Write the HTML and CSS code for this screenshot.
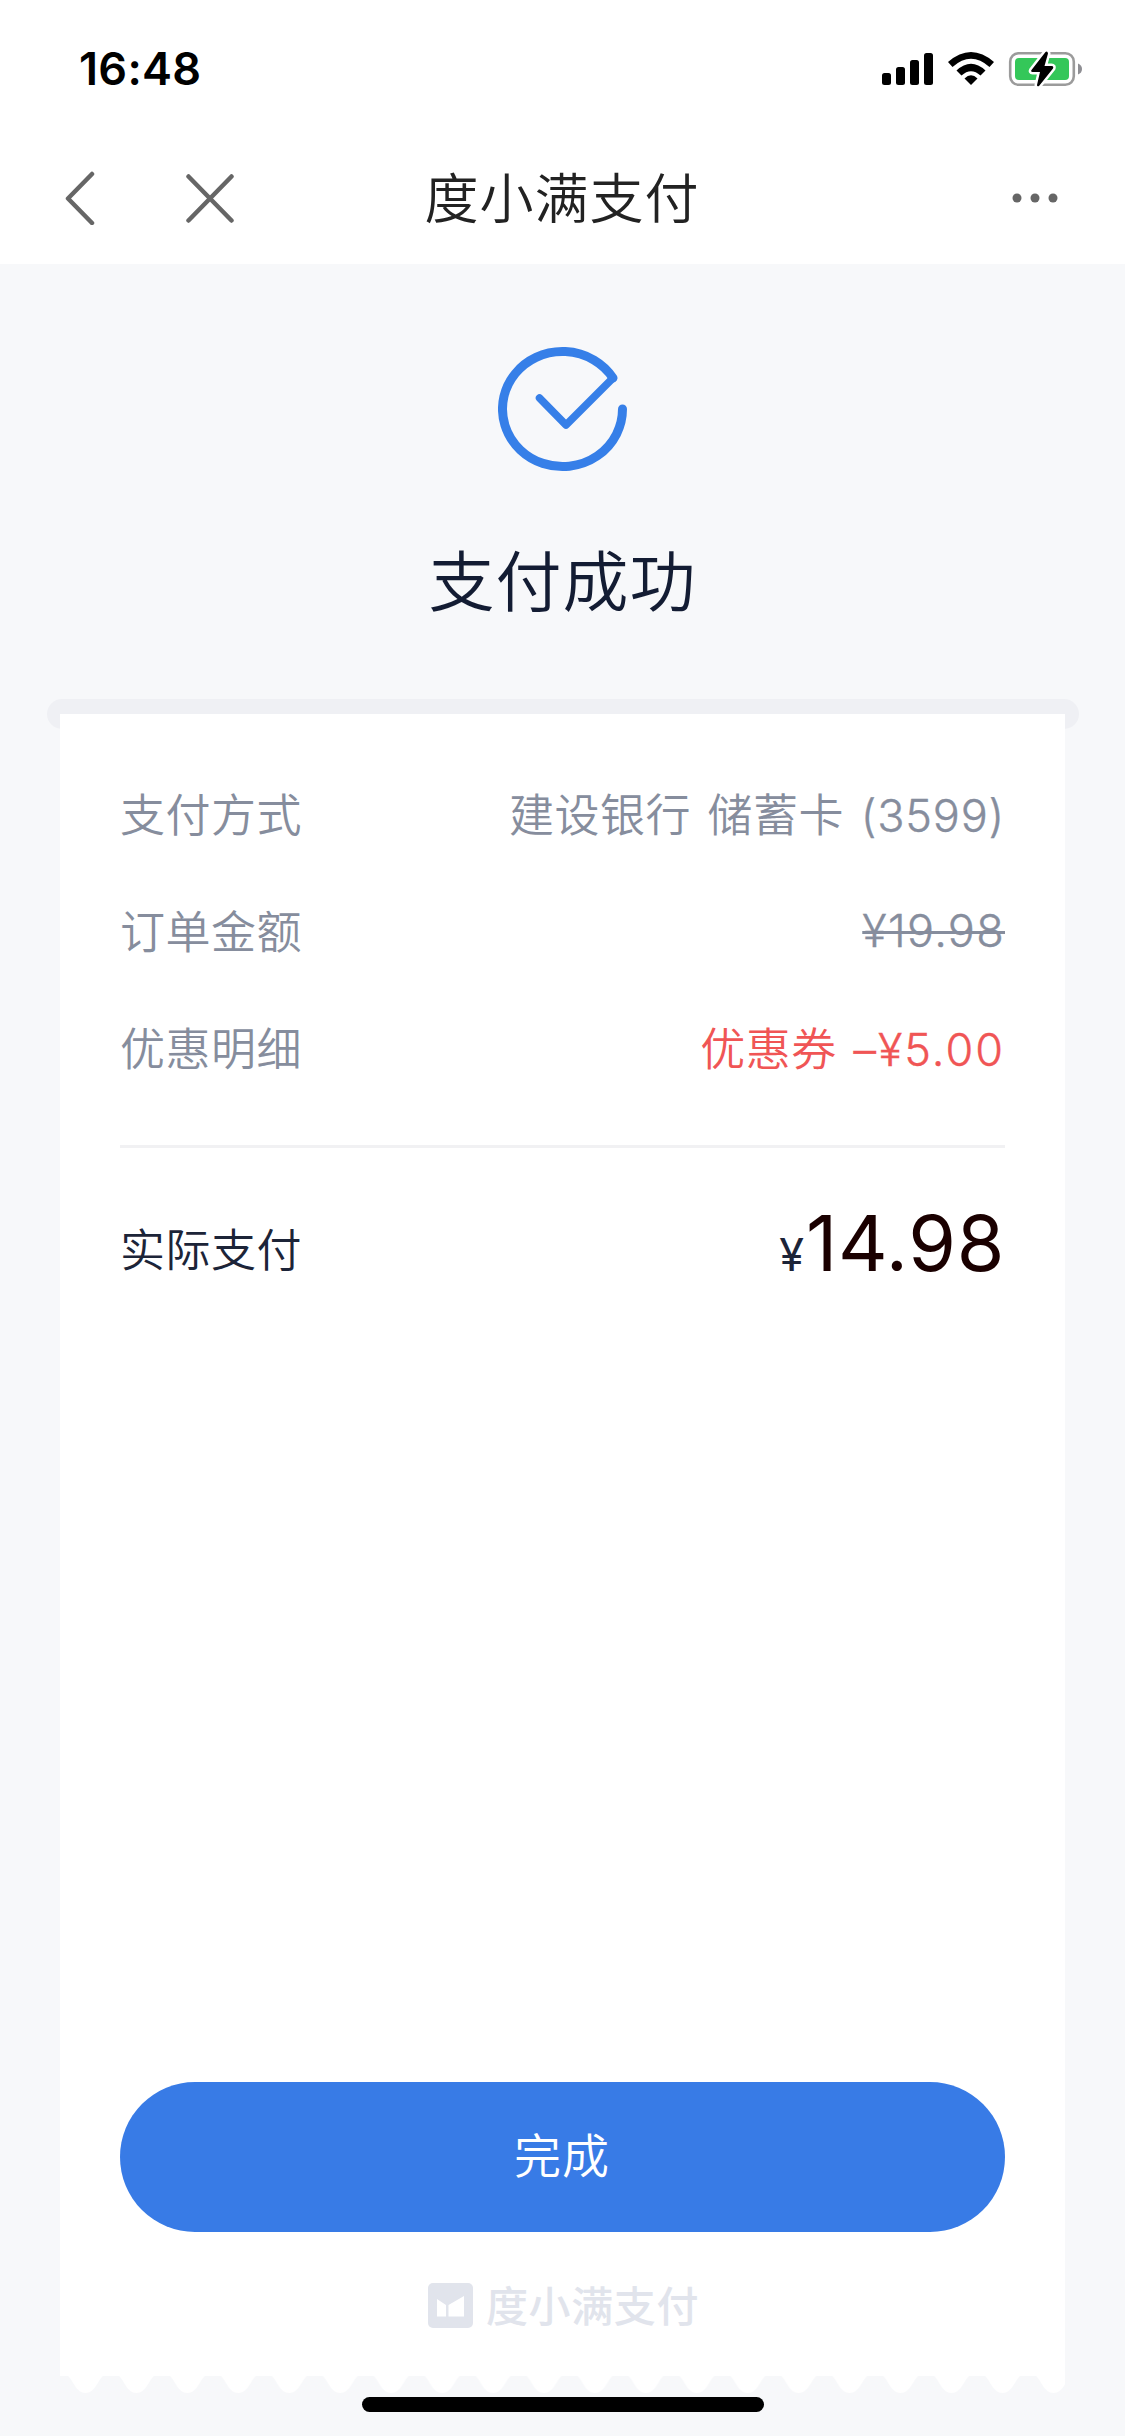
FILE: index.html
```html
<!DOCTYPE html>
<html lang="zh-CN">
<head>
<meta charset="utf-8">
<title>度小满支付</title>
<link rel="stylesheet" href="styles.css">
</head>
<body>
<div class="screen">
  <header class="top">
    <div class="status">
      <span class="time">16:48</span>
      <svg class="indicators" width="202" height="36" viewBox="881 51 202 36">
        <rect x="882" y="73" width="9" height="12" rx="2.5"/>
        <rect x="896" y="67" width="9" height="18" rx="2.5"/>
        <rect x="910" y="60" width="9" height="25" rx="2.5"/>
        <rect x="924" y="53" width="9" height="32" rx="2.5"/>
        <path d="M948 62Q971 42 994 62L989.500 67Q971 50.500 952.500 67Z"/>
        <path d="M956.500 70.500Q971 57 985.500 70.500L980.500 75.500Q971 67 961.500 75.500Z"/>
        <path d="M964.500 78.500Q971 72 977.500 78.500L971 85Z"/>
        <rect x="1010.200" y="53.200" width="63.600" height="31.600" rx="8.500" fill="none" stroke="#9b9b9b" stroke-width="2.600"/>
        <path d="M1078 63.500Q1082 65 1082 69Q1082 73 1078 74.500Z" fill="#8e8e93"/>
        <rect x="1015" y="58" width="54" height="22" rx="4" fill="#34c759"/>
        <path class="bolt" d="M1045.500 52L1031.500 70Q1030.500 72 1032.500 72H1040L1037 85Q1037 87 1039 86L1053 68.500Q1054 66 1051.500 66H1044.500L1048 53.500Q1047.500 50.500 1045.500 52Z"/>
      </svg>
    </div>
    <nav class="navbar">
      <div class="nav-left">
        <svg width="30" height="54" viewBox="0 0 30 54"><path class="nav-line" d="M27 3L3 27.500L27 52"/></svg>
        <svg width="48" height="49" viewBox="0 0 48 49"><path class="nav-line" d="M2.500 2.500L45.500 46.500M45.500 2.500L2.500 46.500"/></svg>
      </div>
      <h1 class="title">度小满支付</h1>
      <svg class="more" width="46" height="10" viewBox="0 0 46 10"><circle cx="5" cy="5" r="4.500"/><circle cx="23" cy="5" r="4.500"/><circle cx="41" cy="5" r="4.500"/></svg>
    </nav>
  </header>
  <section class="result">
    <svg class="ok" width="130" height="126" viewBox="498 346 130 126">
      <path d="M622.500 409A60 57.500 0 1 1 613 378" stroke-width="9"/>
      <path d="M613 378L566 425L539.500 398" stroke-width="7.500"/>
    </svg>
    <p class="result-text">支付成功</p>
  </section>
  <main class="slot">
    <div class="card">
      <dl class="rows">
        <div class="row"><dt>支付方式</dt><dd>建设银行 储蓄卡 <span class="num">(3599)</span></dd></div>
        <div class="row"><dt>订单金额</dt><dd class="struck"><span class="num">¥19.98</span></dd></div>
        <div class="row"><dt>优惠明细</dt><dd class="coupon">优惠券 <span class="num">–¥5.00</span></dd></div>
      </dl>
      <div class="total"><span class="total-label">实际支付</span><span class="sum"><span class="yen">¥</span>14.98</span></div>
      <button class="done" type="button">完成</button>
      <div class="brand">
        <svg width="45" height="45" viewBox="0 0 45 45"><rect width="45" height="45" rx="5" fill="#e1e4ec"/><path d="M9 16L18 22V33.500H9ZM20.500 22L36 13V33.500H20.500Z" fill="#fff"/></svg>
        <span class="brand-name">度小满支付</span>
      </div>
    </div>
    <svg class="edge" width="1005" height="18" viewBox="0 0 1005 18">
      <defs><pattern id="tooth" width="50.950" height="18" patternUnits="userSpaceOnUse"><path d="M8 0C13 4 16 17 25.500 17S38 4 43 0Z" fill="#fff"/></pattern></defs>
      <rect width="1005" height="18" fill="url(#tooth)"/>
    </svg>
  </main>
  <div class="home"></div>
</div>
</body>
</html>
```
FILE: styles.css
```css
* { box-sizing: border-box; }
body {
  margin: 0;
  background: #f7f8fa;
  font-family: Inter, "Noto Sans CJK SC", sans-serif;
}
p, h1, dl, dd { margin: 0; }
svg { display: block; }
.screen {
  position: relative;
  display: flex;
  flex-direction: column;
  width: 1125px;
  height: 2436px;
  overflow: hidden;
}
.top { height: 264px; background: #fff; }
.status {
  display: flex;
  justify-content: space-between;
  align-items: center;
  height: 138px;
  padding: 0 42px 0 79px;
}
.time { font-size: 45px; font-weight: 600; line-height: 54px; letter-spacing: .3px; }
.navbar {
  display: grid;
  grid-template-columns: 1fr auto 1fr;
  align-items: center;
  height: 120px;
  padding: 0 66px 0 65px;
}
.nav-left { display: flex; align-items: center; gap: 91px; }
.nav-line {
  fill: none;
  stroke: #666;
  stroke-width: 4.5;
  stroke-linecap: round;
  stroke-linejoin: round;
}
.title {
  padding-top: 3px;
  font-size: 54px;
  font-weight: 350;
  line-height: 80px;
  letter-spacing: 1px;
  color: #222;
}
.more { justify-self: end; margin-right: 1px; fill: #666; }
.result {
  display: flex;
  flex-direction: column;
  align-items: center;
  height: 435px;
  padding-top: 82px;
}
.ok {
  fill: none;
  stroke: #367fe8;
  stroke-linecap: round;
  stroke-linejoin: round;
}
.bolt { stroke: #fff; stroke-width: 5; paint-order: stroke; }
.result-text {
  margin-top: 60px;
  font-size: 66px;
  font-weight: 350;
  line-height: 100px;
  letter-spacing: 1px;
  color: #131c33;
}
.slot {
  width: 1032px;
  margin-left: 47px;
  padding: 15px 14px 0 13px;
}
.slot::before {
  content: "";
  display: block;
  height: 30px;
  margin: -15px -14px -15px -13px;
  border-radius: 15px;
  background: #eff0f4;
}
.card {
  position: relative;
  display: flex;
  flex-direction: column;
  height: 1662px;
  padding: 0 60px;
  background: #fff;
}
.rows {
  padding: 40px 0 0;
  height: 434px;
  border-bottom: 3px solid #f1f1f3;
  font-size: 45px;
  font-weight: 350;
  color: #868d9d;
}
.row {
  display: flex;
  justify-content: space-between;
  align-items: center;
  height: 117px;
  letter-spacing: .5px;
  word-spacing: 3.5px;
  white-space: nowrap;
}
.num { letter-spacing: .8px; -webkit-text-stroke: .4px currentColor; }
.struck { padding-top: 2px; text-decoration: line-through; text-decoration-thickness: 3px; }
.struck .num { letter-spacing: 1.3px; }
.coupon { color: #f05555; }
.coupon .num { letter-spacing: 2px; }
.total {
  display: flex;
  justify-content: space-between;
  align-items: flex-start;
  height: 200px;
  padding-top: 48px;
}
.total-label {
  padding-top: 22px;
  font-size: 45px;
  font-weight: 350;
  line-height: 66px;
  letter-spacing: .5px;
  color: #1c2438;
}
.sum { font-size: 77px; font-weight: 400; line-height: 94px; letter-spacing: .7px; color: #1a0000; }
.yen { font-size: 45px; letter-spacing: 2px; color: #1c2438; }
.done {
  height: 150px;
  margin-top: auto;
  padding: 0 1px 3px 0;
  border: 0;
  border-radius: 75px;
  background: #387be6;
  color: #fff;
  font: 350 47px/147px Inter, "Noto Sans CJK SC", sans-serif;
  letter-spacing: 1px;
}
.brand {
  display: flex;
  justify-content: center;
  align-items: center;
  gap: 13px;
  height: 45px;
  margin: 51px 0 48px 2px;
  font-size: 42px;
  font-weight: 500;
  letter-spacing: .6px;
  color: #e1e4ec;
}
.brand-name { padding-bottom: 4px; }
.home {
  position: absolute;
  left: 362px;
  top: 2397px;
  width: 402px;
  height: 15px;
  border-radius: 8px;
  background: #000;
}
```
